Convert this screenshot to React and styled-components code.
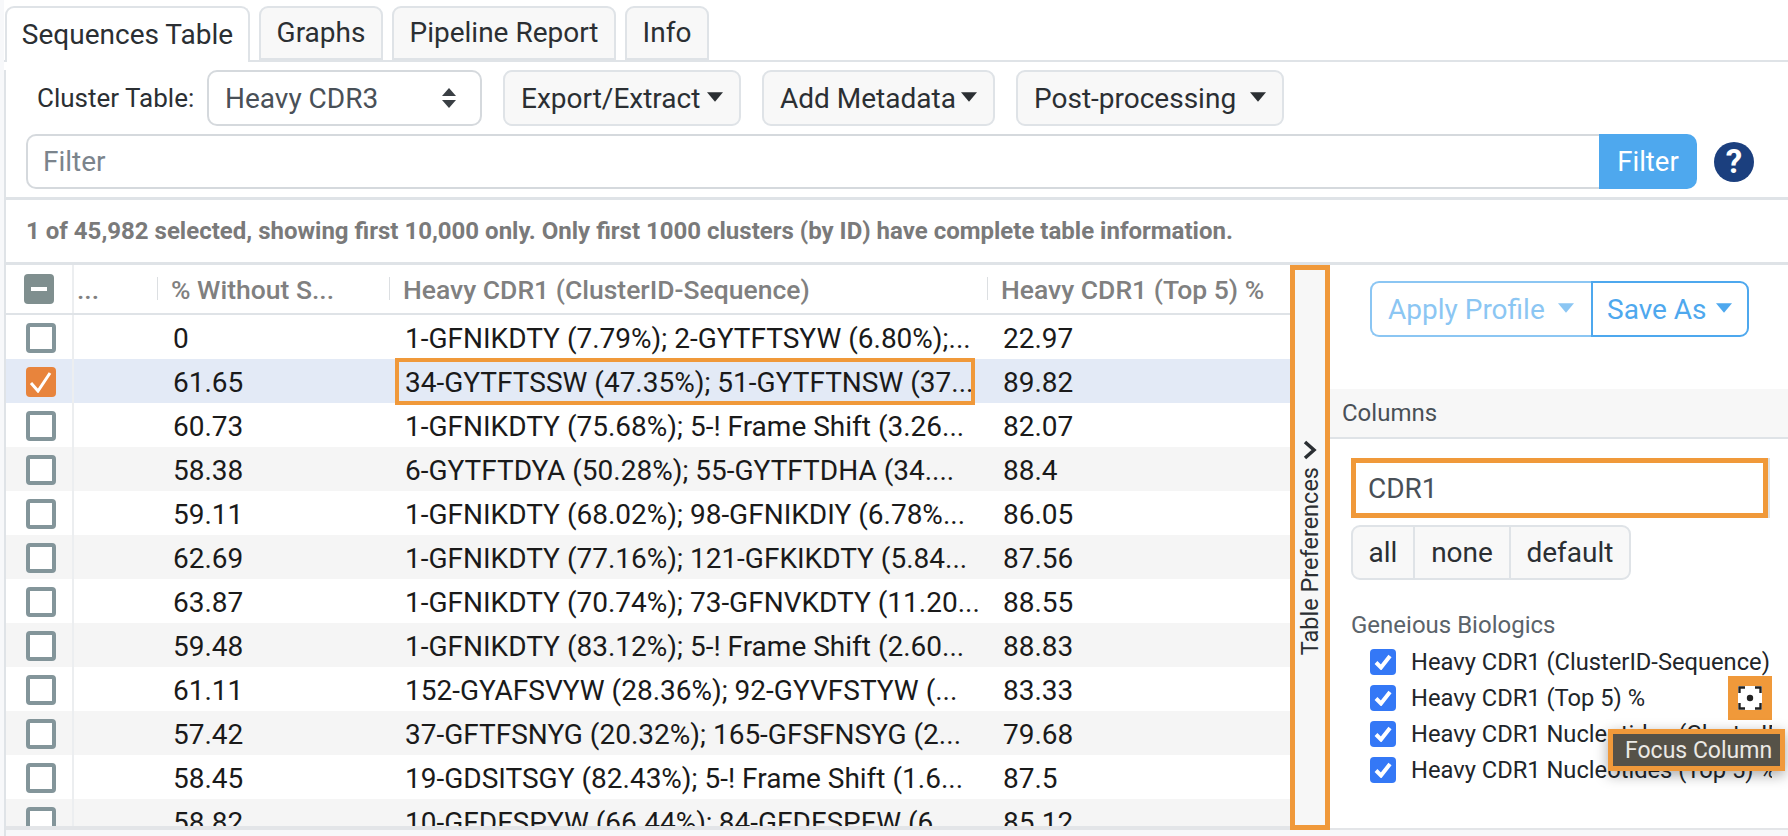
import React from 'react'
import styled, { createGlobalStyle } from 'styled-components'

const orange = '#f0993a'
const blue = '#4ea8ee'
const line = '#dfe3e7'

const GlobalStyle = createGlobalStyle`
    html, body {
        margin: 0;
        padding: 0;
        background: #fff;
    }
    * {
        box-sizing: border-box;
    }
    body {
        font-family: Roboto, "Liberation Sans", sans-serif;
        color: #212529;
    }
`;

const Page = styled.div`
    width: 1788px;
    height: 836px;
    padding-left: 4px;
    overflow: hidden;
    background: #f7f8fa;
`;

const Sheet = styled.div`
    background: #fff;
    height: 830px;
`;

const TabBar = styled.div`
    display: flex;
    align-items: flex-end;
    gap: 9px;
    height: 62px;
    padding: 6px 0 0 1px;
    border-bottom: 2px solid ${line};
`;

const Tab = styled.div`
    width: ${p => p.$width}px;
    height: ${p => (p.$active ? '56px' : '54px')};
    margin-bottom: ${p => (p.$active ? '-2px' : '0')};
    padding-bottom: 2px;
    display: flex;
    align-items: center;
    justify-content: center;
    font-size: 28px;
    color: #2b2f33;
    background: ${p => (p.$active ? '#fff' : '#f8f8f8')};
    border: 2px solid ${line};
    border-bottom: ${p => (p.$active ? 'none' : `2px solid ${line}`)};
    border-radius: 9px 9px 0 0;
`;

const Body = styled.div`
    border-left: 2px solid ${line};
    height: 768px;
`;

const Toolbar = styled.div`
    display: flex;
    align-items: center;
    height: 56px;
    margin-top: 8px;
    padding-left: 31px;
`;

const ToolLabel = styled.span`
    font-size: 26px;
    color: #2b2f33;
    width: 170px;
`;

const SelectBox = styled.div`
    width: 275px;
    height: 56px;
    padding: 0 23px 0 16px;
    margin-right: 21px;
    display: flex;
    align-items: center;
    justify-content: space-between;
    font-size: 28px;
    color: #495057;
    border: 2px solid #d5d9dd;
    border-radius: 10px;
`;

const ToolButton = styled.div`
    width: ${p => p.$width}px;
    height: 56px;
    margin-right: 21px;
    padding: 0 16px;
    display: flex;
    align-items: center;
    justify-content: space-between;
    font-size: 28px;
    color: #2b2f33;
    background: #f8f8f8;
    border: 2px solid ${line};
    border-radius: 9px;
`;

const Caret = styled.svg`
    width: 16px;
    height: 10px;
    flex: none;
    fill: currentColor;
    margin-bottom: 3px;
`;

const FilterRow = styled.div`
    display: flex;
    align-items: center;
    height: 55px;
    margin-top: 8px;
    padding-left: 20px;
`;

const FilterInput = styled.div`
    width: 1573px;
    height: 55px;
    padding-left: 15px;
    display: flex;
    align-items: center;
    font-size: 28px;
    color: #7b848c;
    border: 2px solid #d5d9dd;
    border-right: none;
    border-radius: 10px 0 0 10px;
`;

const FilterButton = styled.div`
    width: 98px;
    height: 55px;
    display: flex;
    align-items: center;
    justify-content: center;
    font-size: 27.5px;
    color: #fff;
    background: ${blue};
    border-radius: 0 10px 10px 0;
`;

const HelpIcon = styled.div`
    width: 40px;
    height: 40px;
    margin-left: 17px;
    border-radius: 50%;
    background: #1b3f7e;
    color: #fff;
    display: flex;
    align-items: center;
    justify-content: center;
    font-size: 33px;
    font-weight: 700;
`;

const Status = styled.div`
    height: 68px;
    margin-top: 8px;
    padding-left: 20px;
    display: flex;
    align-items: center;
    font-size: 24px;
    font-weight: 700;
    color: #7a7a7a;
    border-top: 3px solid ${line};
    border-bottom: 3px solid ${line};
`;

const TableArea = styled.div`
    display: flex;
    height: 565px;
`;

const Table = styled.div`
    flex: none;
    width: 1284px;
    overflow: hidden;
    border-bottom: 4px solid #e3e5e8;
`;

const HeaderRow = styled.div`
    display: grid;
    grid-template-columns: 68px 83px 232px 598px 1fr;
    height: 50px;
    border-bottom: 2px solid ${line};
`;

const CheckCell = styled.div`
    display: flex;
    align-items: center;
    padding-left: ${p => p.$pad}px;
    padding-top: ${p => (p.$pad === 20 ? '1px' : '0')};
    border-right: 2px solid #eceef0;
`;

const HeadCell = styled.div`
    display: flex;
    align-items: center;
    padding-left: ${p => (p.$first ? '3px' : '14px')};
    font-size: 26.5px;
    font-weight: 500;
    color: #808080;
    white-space: nowrap;
    position: relative;
    &::before {
        content: "";
        display: ${p => (p.$first ? 'none' : 'block')};
        position: absolute;
        left: 0;
        top: 12px;
        bottom: 13px;
        width: 1px;
        background: #dcdfe2;
    }
`;

const Row = styled.div`
    display: grid;
    grid-template-columns: 68px 83px 232px 598px 1fr;
    height: 44px;
    background: ${p => (p.$selected ? '#e3eaf6' : p.$odd ? '#f5f5f5' : '#fff')};
`;

const Cell = styled.div`
    display: flex;
    align-items: center;
    padding: 3px 0 0 16px;
    font-size: 28px;
    color: #1a1a1a;
    white-space: nowrap;
    overflow: ${p => (p.$outlined ? 'visible' : 'hidden')};
    position: relative;
`;

const CellOutline = styled.div`
    position: absolute;
    left: 6px;
    right: 12px;
    top: -1px;
    bottom: -2px;
    border: 4px solid ${orange};
`;

const Box = styled.div`
    width: 30px;
    height: 30px;
    border-radius: 4px;
    display: flex;
    align-items: center;
    justify-content: center;
    background: ${p => (p.$fill ? p.$fill : '#fff')};
    border: ${p => (p.$fill ? 'none' : '4px solid #83959a')};
`;

const Toggle = styled.div`
    flex: none;
    width: 40px;
    display: flex;
    flex-direction: column;
    align-items: center;
    justify-content: center;
    gap: 7px;
    background: #f7f7f7;
    border: 5px solid ${orange};
`;

const ToggleText = styled.span`
    writing-mode: vertical-rl;
    transform: rotate(180deg);
    font-size: 23.5px;
    color: #2b2f33;
    white-space: nowrap;
`;

const SidePanel = styled.div`
    flex: 1;
    border-bottom: 2px solid #e3e5e8;
`;

const ProfileGroup = styled.div`
    display: flex;
    margin: 16px 0 52px 40px;
    height: 56px;
`;

const ProfileButton = styled.div`
    width: ${p => p.$width}px;
    padding: ${p => (p.$dim ? '0 17px 0 16px' : '0 15px 0 14px')};
    display: flex;
    align-items: center;
    justify-content: space-between;
    font-size: 28px;
    color: ${blue};
    opacity: ${p => (p.$dim ? 0.65 : 1)};
    border: 2px solid ${blue};
    border-radius: ${p => (p.$dim ? '9px 0 0 9px' : '0 9px 9px 0')};
    border-right: ${p => (p.$dim ? 'none' : `2px solid ${blue}`)};
`;

const SideHeader = styled.div`
    height: 50px;
    padding-left: 12px;
    display: flex;
    align-items: center;
    font-size: 24px;
    color: #495057;
    background: #f7f7f7;
    border-bottom: 2px solid ${line};
`;

const SideBody = styled.div`
    padding: 19px 0 0 21px;
`;

const SearchBox = styled.div`
    width: 417px;
    height: 60px;
    padding-left: 12px;
    display: flex;
    align-items: center;
    font-size: 28px;
    color: #495057;
    border: 5px solid ${orange};
    box-shadow: 2px 0 0 ${line};
`;

const PresetGroup = styled.div`
    display: inline-flex;
    height: 55px;
    margin-top: 7px;
    background: #f8f8f8;
    border: 2px solid ${line};
    border-radius: 9px;
`;

const Preset = styled.div`
    display: flex;
    align-items: center;
    justify-content: center;
    width: ${p => p.$width}px;
    font-size: 28px;
    color: #2b2f33;
    border-left: ${p => (p.$first ? 'none' : `2px solid ${line}`)};
`;

const GroupTitle = styled.div`
    margin-top: 32px;
    font-size: 24px;
    line-height: 26px;
    color: #5b636a;
`;

const ColumnList = styled.div`
    position: relative;
    width: 421px;
    margin-top: 6px;
    padding-left: 19px;
`;

const ColumnRow = styled.div`
    display: flex;
    align-items: center;
    gap: 15px;
    height: 36px;
    position: relative;
`;

const BlueBox = styled.div`
    flex: none;
    width: 26px;
    height: 26px;
    border-radius: 4px;
    background: #3478f6;
    display: flex;
    align-items: center;
    justify-content: center;
`;

const ColumnName = styled.span`
    font-size: 23.7px;
    color: #212529;
    white-space: nowrap;
    overflow: hidden;
    width: 361px;
`;

const FocusButton = styled.div`
    position: absolute;
    right: 0;
    top: -4px;
    width: 44px;
    height: 44px;
    display: flex;
    align-items: center;
    justify-content: center;
    background: #fff;
    border: 10px solid ${orange};
`;

const Tooltip = styled.div`
    position: absolute;
    left: 257px;
    top: 85px;
    width: 177px;
    height: 42px;
    display: flex;
    align-items: center;
    padding-left: 12px;
    font-size: 23px;
    color: #ebe9e5;
    background: #565248;
    border: 5px solid ${orange};
    box-shadow: 0 4px 14px rgba(0, 0, 0, 0.35);
`;

const rows = [
    ['0', '1-GFNIKDTY (7.79%); 2-GYTFTSYW (6.80%);...', '22.97'],
    ['61.65', '34-GYTFTSSW (47.35%); 51-GYTFTNSW (37...', '89.82'],
    ['60.73', '1-GFNIKDTY (75.68%); 5-! Frame Shift (3.26...', '82.07'],
    ['58.38', '6-GYTFTDYA (50.28%); 55-GYTFTDHA (34....', '88.4'],
    ['59.11', '1-GFNIKDTY (68.02%); 98-GFNIKDIY (6.78%...', '86.05'],
    ['62.69', '1-GFNIKDTY (77.16%); 121-GFKIKDTY (5.84...', '87.56'],
    ['63.87', '1-GFNIKDTY (70.74%); 73-GFNVKDTY (11.20...', '88.55'],
    ['59.48', '1-GFNIKDTY (83.12%); 5-! Frame Shift (2.60...', '88.83'],
    ['61.11', '152-GYAFSVYW (28.36%); 92-GYVFSTYW (...', '83.33'],
    ['57.42', '37-GFTFSNYG (20.32%); 165-GFSFNSYG (2...', '79.68'],
    ['58.45', '19-GDSITSGY (82.43%); 5-! Frame Shift (1.6...', '87.5'],
    ['58.82', '10-GFDFSPYW (66.44%); 84-GFDFSPFW (6...', '85.12'],
]

const columns = [
    'Heavy CDR1 (ClusterID-Sequence)',
    'Heavy CDR1 (Top 5) %',
    'Heavy CDR1 Nucleotides (ClusterID-Sequence)',
    'Heavy CDR1 Nucleotides (Top 5) %',
]

function DownCaret() {
    return (
        <Caret viewBox="0 0 10 6">
            <path d="M0 0h10L5 6z" />
        </Caret>
    )
}

function SortArrows() {
    return (
        <svg width="16" height="20" viewBox="0 0 16 20" fill="#3a3f44">
            <path d="M8 0l7 8H1zM8 20l-7-8h14z" />
        </svg>
    )
}

function ThinCheck() {
    return (
        <svg width="24" height="22" viewBox="0 0 24 22" fill="none" stroke="#fff" strokeWidth="3">
            <path d="M2 12l7 8L21 2" />
        </svg>
    )
}

function ThickCheck() {
    return (
        <svg width="18" height="16" viewBox="0 0 18 16" fill="none" stroke="#fff" strokeWidth="4">
            <path d="M2 8.5l5 5L16 2" />
        </svg>
    )
}

function FocusIcon() {
    return (
        <svg width="24" height="24" viewBox="0 0 24 24" fill="none" stroke="#222" strokeWidth="2.4">
            <path d="M1.5 7V1.5H7M17 1.5h5.5V7M22.5 17v5.5H17M7 22.5H1.5V17" />
            <circle cx="12" cy="12" r="3.2" fill="#222" stroke="none" />
        </svg>
    )
}

export default function App() {
    return (
        <Page>
            <GlobalStyle />
            <Sheet>
                <TabBar>
                    <Tab $active $width={245}>Sequences Table</Tab>
                    <Tab $width={124}>Graphs</Tab>
                    <Tab $width={224}>Pipeline Report</Tab>
                    <Tab $width={84}>Info</Tab>
                </TabBar>
                <Body>
                    <Toolbar>
                        <ToolLabel>Cluster Table:</ToolLabel>
                        <SelectBox>
                            Heavy CDR3
                            <SortArrows />
                        </SelectBox>
                        <ToolButton $width={238}>Export/Extract<DownCaret /></ToolButton>
                        <ToolButton $width={233}>Add Metadata<DownCaret /></ToolButton>
                        <ToolButton $width={268}>Post-processing<DownCaret /></ToolButton>
                    </Toolbar>
                    <FilterRow>
                        <FilterInput>Filter</FilterInput>
                        <FilterButton>Filter</FilterButton>
                        <HelpIcon>?</HelpIcon>
                    </FilterRow>
                    <Status>1 of 45,982 selected, showing first 10,000 only. Only first 1000 clusters (by ID) have complete table information.</Status>
                    <TableArea>
                        <Table>
                            <HeaderRow>
                                <CheckCell $pad={18}>
                                    <Box $fill="#7f8f8f">
                                        <svg width="16" height="4"><rect width="16" height="4" fill="#fff" /></svg>
                                    </Box>
                                </CheckCell>
                                <HeadCell $first>...</HeadCell>
                                <HeadCell>% Without S...</HeadCell>
                                <HeadCell>Heavy CDR1 (ClusterID-Sequence)</HeadCell>
                                <HeadCell>Heavy CDR1 (Top 5) %</HeadCell>
                            </HeaderRow>
                            {rows.map((r, i) => (
                                <Row key={r[0]} $selected={i === 1} $odd={i % 2 === 1}>
                                    <CheckCell $pad={20}>
                                        {i === 1 ? <Box $fill="#e8843c"><ThinCheck /></Box> : <Box />}
                                    </CheckCell>
                                    <Cell />
                                    <Cell>{r[0]}</Cell>
                                    <Cell $outlined={i === 1}>
                                        {r[1]}
                                        {i === 1 && <CellOutline />}
                                    </Cell>
                                    <Cell>{r[2]}</Cell>
                                </Row>
                            ))}
                        </Table>
                        <Toggle>
                            <svg width="14" height="20" viewBox="0 0 14 20" fill="none" stroke="#2b2f33" strokeWidth="3.5">
                                <path d="M2 2l9 8-9 8" />
                            </svg>
                            <ToggleText>Table Preferences</ToggleText>
                        </Toggle>
                        <SidePanel>
                            <ProfileGroup>
                                <ProfileButton $dim $width={221}>Apply Profile<DownCaret /></ProfileButton>
                                <ProfileButton $width={158}>Save As<DownCaret /></ProfileButton>
                            </ProfileGroup>
                            <SideHeader>Columns</SideHeader>
                            <SideBody>
                                <SearchBox>CDR1</SearchBox>
                                <PresetGroup>
                                    <Preset $first $width={60}>all</Preset>
                                    <Preset $width={96}>none</Preset>
                                    <Preset $width={120}>default</Preset>
                                </PresetGroup>
                                <GroupTitle>Geneious Biologics</GroupTitle>
                                <ColumnList>
                                    {columns.map((c, i) => (
                                        <ColumnRow key={c}>
                                            <BlueBox><ThickCheck /></BlueBox>
                                            <ColumnName>{c}</ColumnName>
                                            {i === 1 && <FocusButton><FocusIcon /></FocusButton>}
                                        </ColumnRow>
                                    ))}
                                    <Tooltip>Focus Column</Tooltip>
                                </ColumnList>
                            </SideBody>
                        </SidePanel>
                    </TableArea>
                </Body>
            </Sheet>
        </Page>
    )
}
